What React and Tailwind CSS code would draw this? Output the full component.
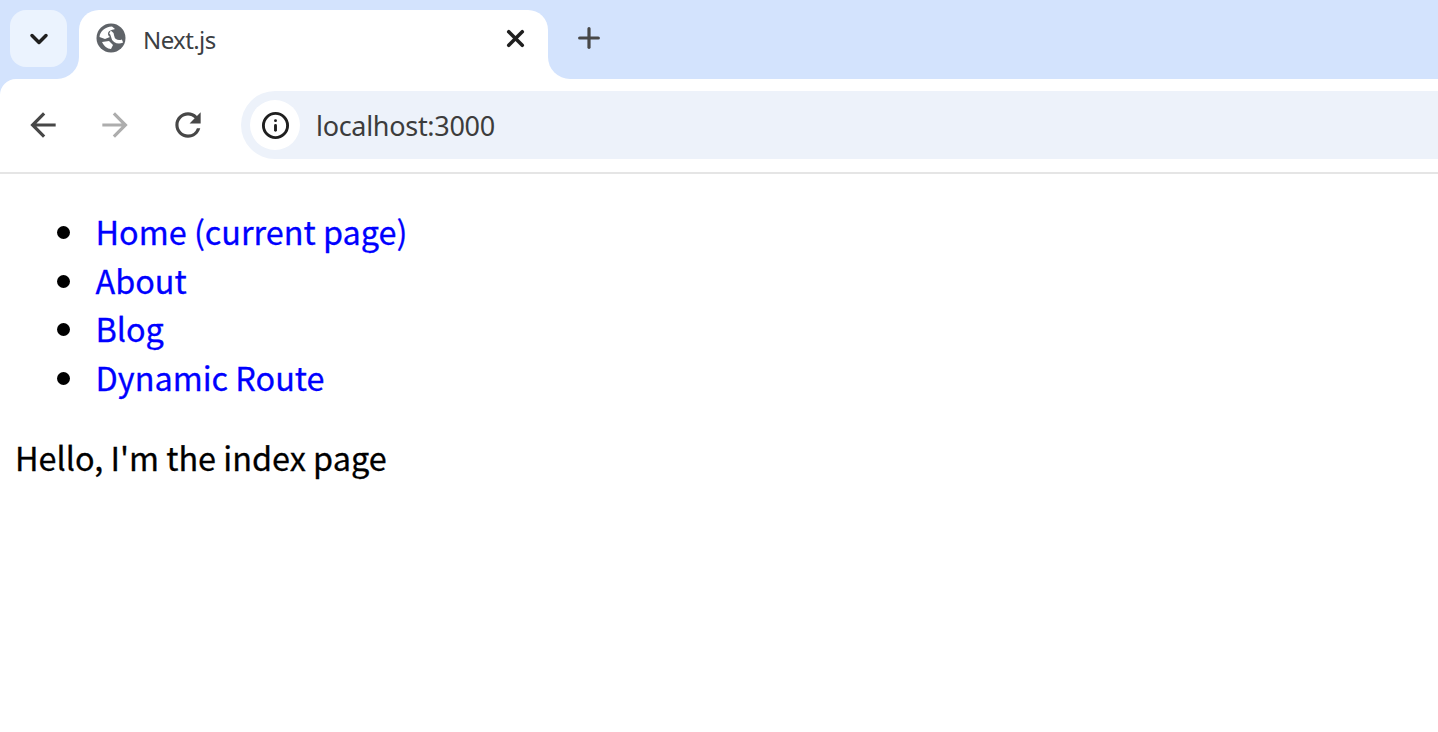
import React from "react";
import { ChevronDown, Info, X, Plus } from "lucide-react";

function Globe() {
  return (
    <svg width="30" height="30" viewBox="0 0 30 30" className="shrink-0">
      <circle cx="15" cy="15" r="14.5" fill="#5f6368" />
      <path d="M3.5 14 C4 8 9 4 16 3.5 L19 6 C15 7 12 8 12 11 C12 13 14 14 14 14 L9 16 Z" fill="#ffffff" />
      <path d="M14 9 C18 11 15 15 19 17.5 C22 19.5 24 19 26.5 18" fill="none" stroke="#ffffff" strokeWidth="3.4" />
      <path d="M6 19 L13 18 L17 22 L15 26 C11 26 8 23 6 19 Z" fill="#ffffff" />
    </svg>
  );
}

function MaterialIcon({ d, className }) {
  return (
    <svg width="38" height="38" viewBox="0 0 24 24" fill="currentColor" className={className}>
      <path d={d} />
    </svg>
  );
}

const links = ["Home (current page)", "About", "Blog", "Dynamic Route"];

export default function App() {
  return (
    <div className="w-[1438px] h-[732px] overflow-hidden bg-white">
      <header className="bg-[#d3e3fd]">
        <div className="h-[79px] flex items-start pl-[10px] pt-[10px]">
          <button className="relative z-10 w-[57px] h-[57px] rounded-[16px] bg-[#ebf3fe] flex items-center justify-center text-[#1f1f1f]">
            <ChevronDown size={28} strokeWidth={3} />
          </button>
          <div className="relative ml-[12px] w-[469px] h-[69px] bg-white rounded-t-[20px] flex items-center pl-[17px] pr-[19px] pb-[13px]">
            <div className="absolute left-[-22px] bottom-0 w-[22px] h-[22px] bg-white">
              <div className="w-full h-full bg-[#d3e3fd] rounded-br-[22px]" />
            </div>
            <div className="absolute right-[-22px] bottom-0 w-[22px] h-[22px] bg-white">
              <div className="w-full h-full bg-[#d3e3fd] rounded-bl-[22px]" />
            </div>
            <Globe />
            <span className="ml-[17px] mt-[4px] text-[24px] tracking-[-0.6px] text-[#3c4043] font-['Noto_Sans',sans-serif]">Next.js</span>
            <X size={27} strokeWidth={3.2} className="ml-auto text-[#1f1f1f]" />
          </div>
          <Plus size={32} strokeWidth={2.4} className="ml-[25px] mt-[12px] text-[#474747]" />
        </div>
        <div className="h-[95px] bg-white rounded-tl-[16px] border-b-2 border-[#e5e5e5] flex items-center pb-[1px]">
          <MaterialIcon d="M20 11H7.83l5.59-5.59L12 4l-8 8 8 8 1.41-1.41L7.83 13H20v-2z" className="ml-[24px] text-[#474747]" />
          <MaterialIcon d="M12 4l-1.41 1.41L16.17 11H4v2h12.17l-5.58 5.59L12 20l8-8z" className="ml-[34px] text-[#adadad]" />
          <MaterialIcon d="M17.65 6.35A7.95 7.95 0 0 0 12 4c-4.42 0-7.99 3.58-7.99 8s3.57 8 7.99 8c3.73 0 6.84-2.55 7.73-6h-2.08A5.99 5.99 0 0 1 12 18c-3.31 0-6-2.69-6-6s2.69-6 6-6c1.66 0 3.14.69 4.22 1.78L13 11h7V4l-2.35 2.35z" className="ml-[35px] text-[#474747]" />
          <div className="ml-[34px] flex-1 h-[68px] bg-[#edf2fa] rounded-l-[34px] flex items-center pl-[9px]">
            <div className="w-[50px] h-[50px] rounded-full bg-white flex items-center justify-center">
              <Info size={29} strokeWidth={2.4} className="text-[#1f1f1f]" />
            </div>
            <span className="ml-[16px] mt-[2px] text-[27px] text-[#3c3c3c] font-['Noto_Sans',sans-serif] tracking-[-0.3px]">localhost:3000</span>
          </div>
        </div>
      </header>
      <main className="font-['Noto_Sans_CJK_JP',sans-serif] text-[32.4px] leading-[48.7px] text-black [-webkit-text-stroke:0.3px]">
        <ul className="pl-[57px] pt-[33px]">
          {links.map((l) => (
            <li key={l} className="flex items-center">
              <span className="w-[13px] h-[13px] mt-[2px] rounded-full bg-black shrink-0" />
              <a href="#" className="ml-[25.5px] text-[#0000ff]">{l}</a>
            </li>
          ))}
        </ul>
        <p className="pl-[15px] mt-[31px]">Hello, I'm the index page</p>
      </main>
    </div>
  );
}
